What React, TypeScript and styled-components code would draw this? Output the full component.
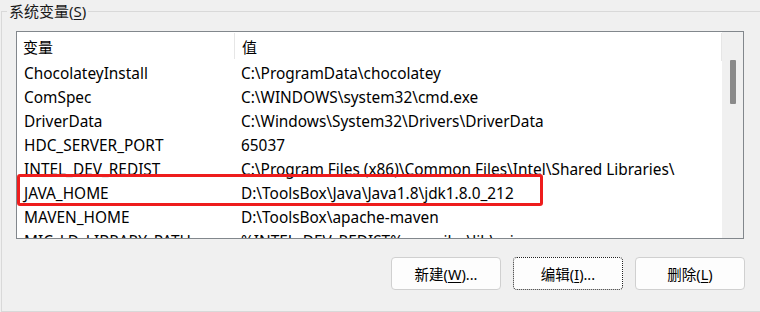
import React from "react";
import styled, { createGlobalStyle } from "styled-components";

const Global = createGlobalStyle`
  html, body { margin: 0; padding: 0; background: #f0f0f0; }
  body { width: 760px; height: 312px; overflow: hidden; font-family: "Noto Sans", "Noto Sans CJK SC", sans-serif; color: #000; }
`;

const Group = styled.fieldset`
  margin: 0 0 0 1px;
  padding: 9px 16px 0 14px;
  border: 1px solid #d9d9d9;
  border-right: none;
  height: 312px;
  box-sizing: border-box;
  min-width: 0;
  display: flex;
  flex-direction: column;
`;

const Title = styled.legend`
  margin-left: -9px;
  padding: 0 2px;
  font-size: 15px;
  line-height: 22px;
  color: #1a1a1a;
`;

const Key = styled.span`
  text-decoration: underline;
  text-underline-offset: 2px;
`;

const ListBox = styled.div`
  display: flex;
  height: 208px;
  flex: none;
  border: 1px solid #82878c;
  background: #fff;
  box-sizing: border-box;
`;

const Table = styled.div`
  flex: 1;
  display: flex;
  flex-direction: column;
  overflow: hidden;
  min-width: 0;
`;

const HeaderRow = styled.div`
  display: grid;
  grid-template-columns: 218px 1fr;
  height: 28px;
  flex: none;
  border-right: 1px solid #e6e6e6;
  margin-top: 1px;
`;

const HeaderCell = styled.div<{ $sep?: boolean }>`
  display: flex;
  align-items: center;
  padding-left: ${(p) => (p.$sep ? "6px" : "7px")};
  font-size: 15px;
  border-right: ${(p) => (p.$sep ? "1px solid #e6e6e6" : "none")};
  margin-bottom: 2px;
`;

const Body = styled.div`
  flex: 1;
  overflow: hidden;
`;

const Row = styled.div<{ $marked?: boolean }>`
  position: relative;
  display: grid;
  grid-template-columns: 218px 1fr;
  height: 24px;
  align-items: center;
  font-size: 15.4px;
  white-space: nowrap;
  &::after {
    content: "";
    display: ${(p) => (p.$marked ? "block" : "none")};
    position: absolute;
    left: 0;
    top: -7px;
    width: 526px;
    height: 32px;
    border: 3px solid #ee1d1d;
    border-radius: 3px;
    box-sizing: border-box;
  }
`;

const Cell = styled.div<{ $value?: boolean }>`
  padding-left: ${(p) => (p.$value ? "6px" : "7px")};
  overflow: hidden;
`;

const ScrollTrack = styled.div`
  width: 21px;
  flex: none;
  background: #f0f0f0;
  display: flex;
  justify-content: center;
  padding-top: 28px;
  box-sizing: border-box;
`;

const Thumb = styled.div`
  width: 6px;
  height: 44px;
  background: #8a8a8a;
  border-radius: 1px;
  margin-left: 1px;
`;

const Buttons = styled.div`
  display: flex;
  justify-content: flex-end;
  gap: 12px;
  margin-top: 18px;
  margin-right: -1px;
`;

const Button = styled.button<{ $focus?: boolean }>`
  width: 110px;
  height: 33px;
  background: #fdfdfd;
  border: 1px ${(p) => (p.$focus ? "dotted #222" : "solid #d0d0d0")};
  border-radius: 4px;
  font-family: "Noto Sans", "Noto Sans CJK SC", sans-serif;
  font-size: 14.5px;
  color: #000;
  padding: 0;
`;

const rows: [string, string][] = [
  ["ChocolateyInstall", "C:\\ProgramData\\chocolatey"],
  ["ComSpec", "C:\\WINDOWS\\system32\\cmd.exe"],
  ["DriverData", "C:\\Windows\\System32\\Drivers\\DriverData"],
  ["HDC_SERVER_PORT", "65037"],
  ["INTEL_DEV_REDIST", "C:\\Program Files (x86)\\Common Files\\Intel\\Shared Libraries\\"],
  ["JAVA_HOME", "D:\\ToolsBox\\Java\\Java1.8\\jdk1.8.0_212"],
  ["MAVEN_HOME", "D:\\ToolsBox\\apache-maven"],
  ["MIC_LD_LIBRARY_PATH", "%INTEL_DEV_REDIST%compiler\\lib\\mic"],
];

export default function App() {
  return (
    <>
      <Global />
      <Group>
        <Title>
          系统变量(<Key>S</Key>)
        </Title>
        <ListBox>
          <Table>
            <HeaderRow>
              <HeaderCell $sep>变量</HeaderCell>
              <HeaderCell>值</HeaderCell>
            </HeaderRow>
            <Body>
              {rows.map(([k, v]) => (
                <Row key={k} $marked={k === "JAVA_HOME"}>
                  <Cell>{k}</Cell>
                  <Cell $value>{v}</Cell>
                </Row>
              ))}
            </Body>
          </Table>
          <ScrollTrack>
            <Thumb />
          </ScrollTrack>
        </ListBox>
        <Buttons>
          <Button>
            新建(<Key>W</Key>)...
          </Button>
          <Button $focus>
            编辑(<Key>I</Key>)...
          </Button>
          <Button>
            删除(<Key>L</Key>)
          </Button>
        </Buttons>
      </Group>
    </>
  );
}
